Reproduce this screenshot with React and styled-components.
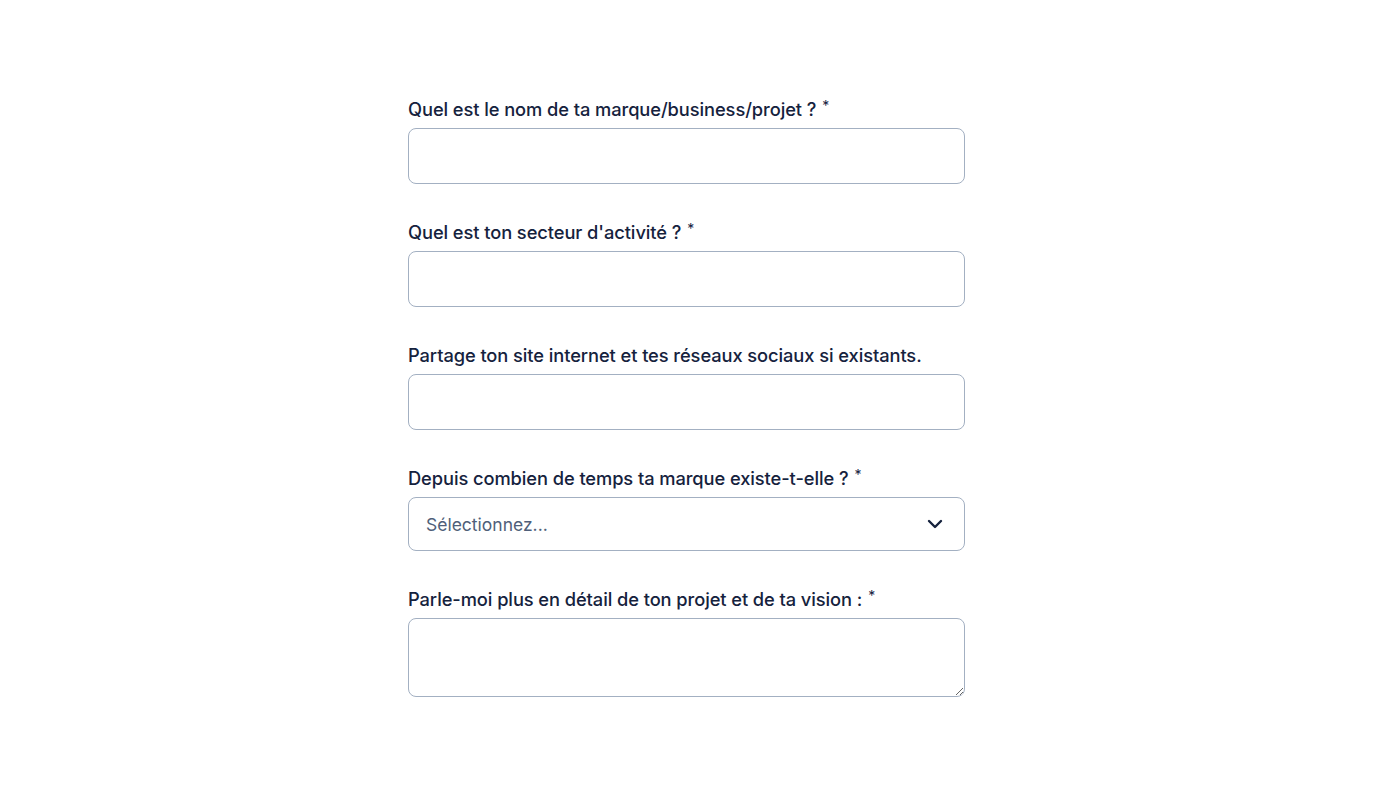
import React from "react";
import styled, { createGlobalStyle } from "styled-components";

const GlobalStyle = createGlobalStyle`
  body {
    margin: 0;
    background: #ffffff;
    font-family: Inter, Lato, sans-serif;
  }
`;

const Page = styled.div`
  display: flex;
  justify-content: center;
  padding: 97px 3px 0 0;
`;

const Form = styled.form`
  width: 557px;
  display: flex;
  flex-direction: column;
  gap: 36px;
`;

const Field = styled.div`
  display: flex;
  flex-direction: column;
  gap: 7px;
`;

const Label = styled.label`
  font-size: 18.3px;
  line-height: 24px;
  font-weight: 500;
  color: #15223d;
  letter-spacing: -0.08px;
`;

const Star = styled.span`
  font-size: 14px;
  font-weight: 400;
  line-height: 0;
  vertical-align: 5px;
  margin-left: 6px;
`;

const boxStyle = `
  box-sizing: border-box;
  width: 100%;
  border: 1px solid #a3b0c2;
  border-radius: 8px;
  background: #ffffff;
  font-family: Inter, Lato, sans-serif;
  font-size: 17.5px;
  color: #15223d;
  padding: 0 17px;
  outline: none;
`;

const Input = styled.input`
  ${boxStyle}
  height: 56px;
`;

const SelectBox = styled.div`
  ${boxStyle}
  height: 54px;
  display: flex;
  align-items: center;
  justify-content: space-between;
  padding-right: 21px;
`;

const Placeholder = styled.span`
  color: #4f5f7a;
  font-size: 17.5px;
  font-weight: 400;
`;

const TextArea = styled.textarea`
  ${boxStyle}
  height: 79px;
  padding: 12px 17px;
  resize: vertical;
  display: block;
`;

const Chevron = () => (
  <svg width="16" height="10" viewBox="0 0 16 10">
    <path d="M2 2l6 6 6-6" fill="none" stroke="#15223d" strokeWidth="2.4" strokeLinecap="round" strokeLinejoin="round" />
  </svg>
);

const fields = [
  { label: "Quel est le nom de ta marque/business/projet ?", required: true },
  { label: "Quel est ton secteur d'activité ?", required: true },
  { label: "Partage ton site internet et tes réseaux sociaux si existants.", required: false },
];

export default function App() {
  return (
    <Page>
      <GlobalStyle />
      <Form>
        {fields.map((f) => (
          <Field key={f.label}>
            <Label>
              {f.label}
              {f.required && <Star>*</Star>}
            </Label>
            <Input type="text" />
          </Field>
        ))}
        <Field>
          <Label>
            Depuis combien de temps ta marque existe-t-elle ?<Star>*</Star>
          </Label>
          <SelectBox>
            <Placeholder>Sélectionnez...</Placeholder>
            <Chevron />
          </SelectBox>
        </Field>
        <Field>
          <Label>
            Parle-moi plus en détail de ton projet et de ta vision :<Star>*</Star>
          </Label>
          <TextArea />
        </Field>
      </Form>
    </Page>
  );
}
